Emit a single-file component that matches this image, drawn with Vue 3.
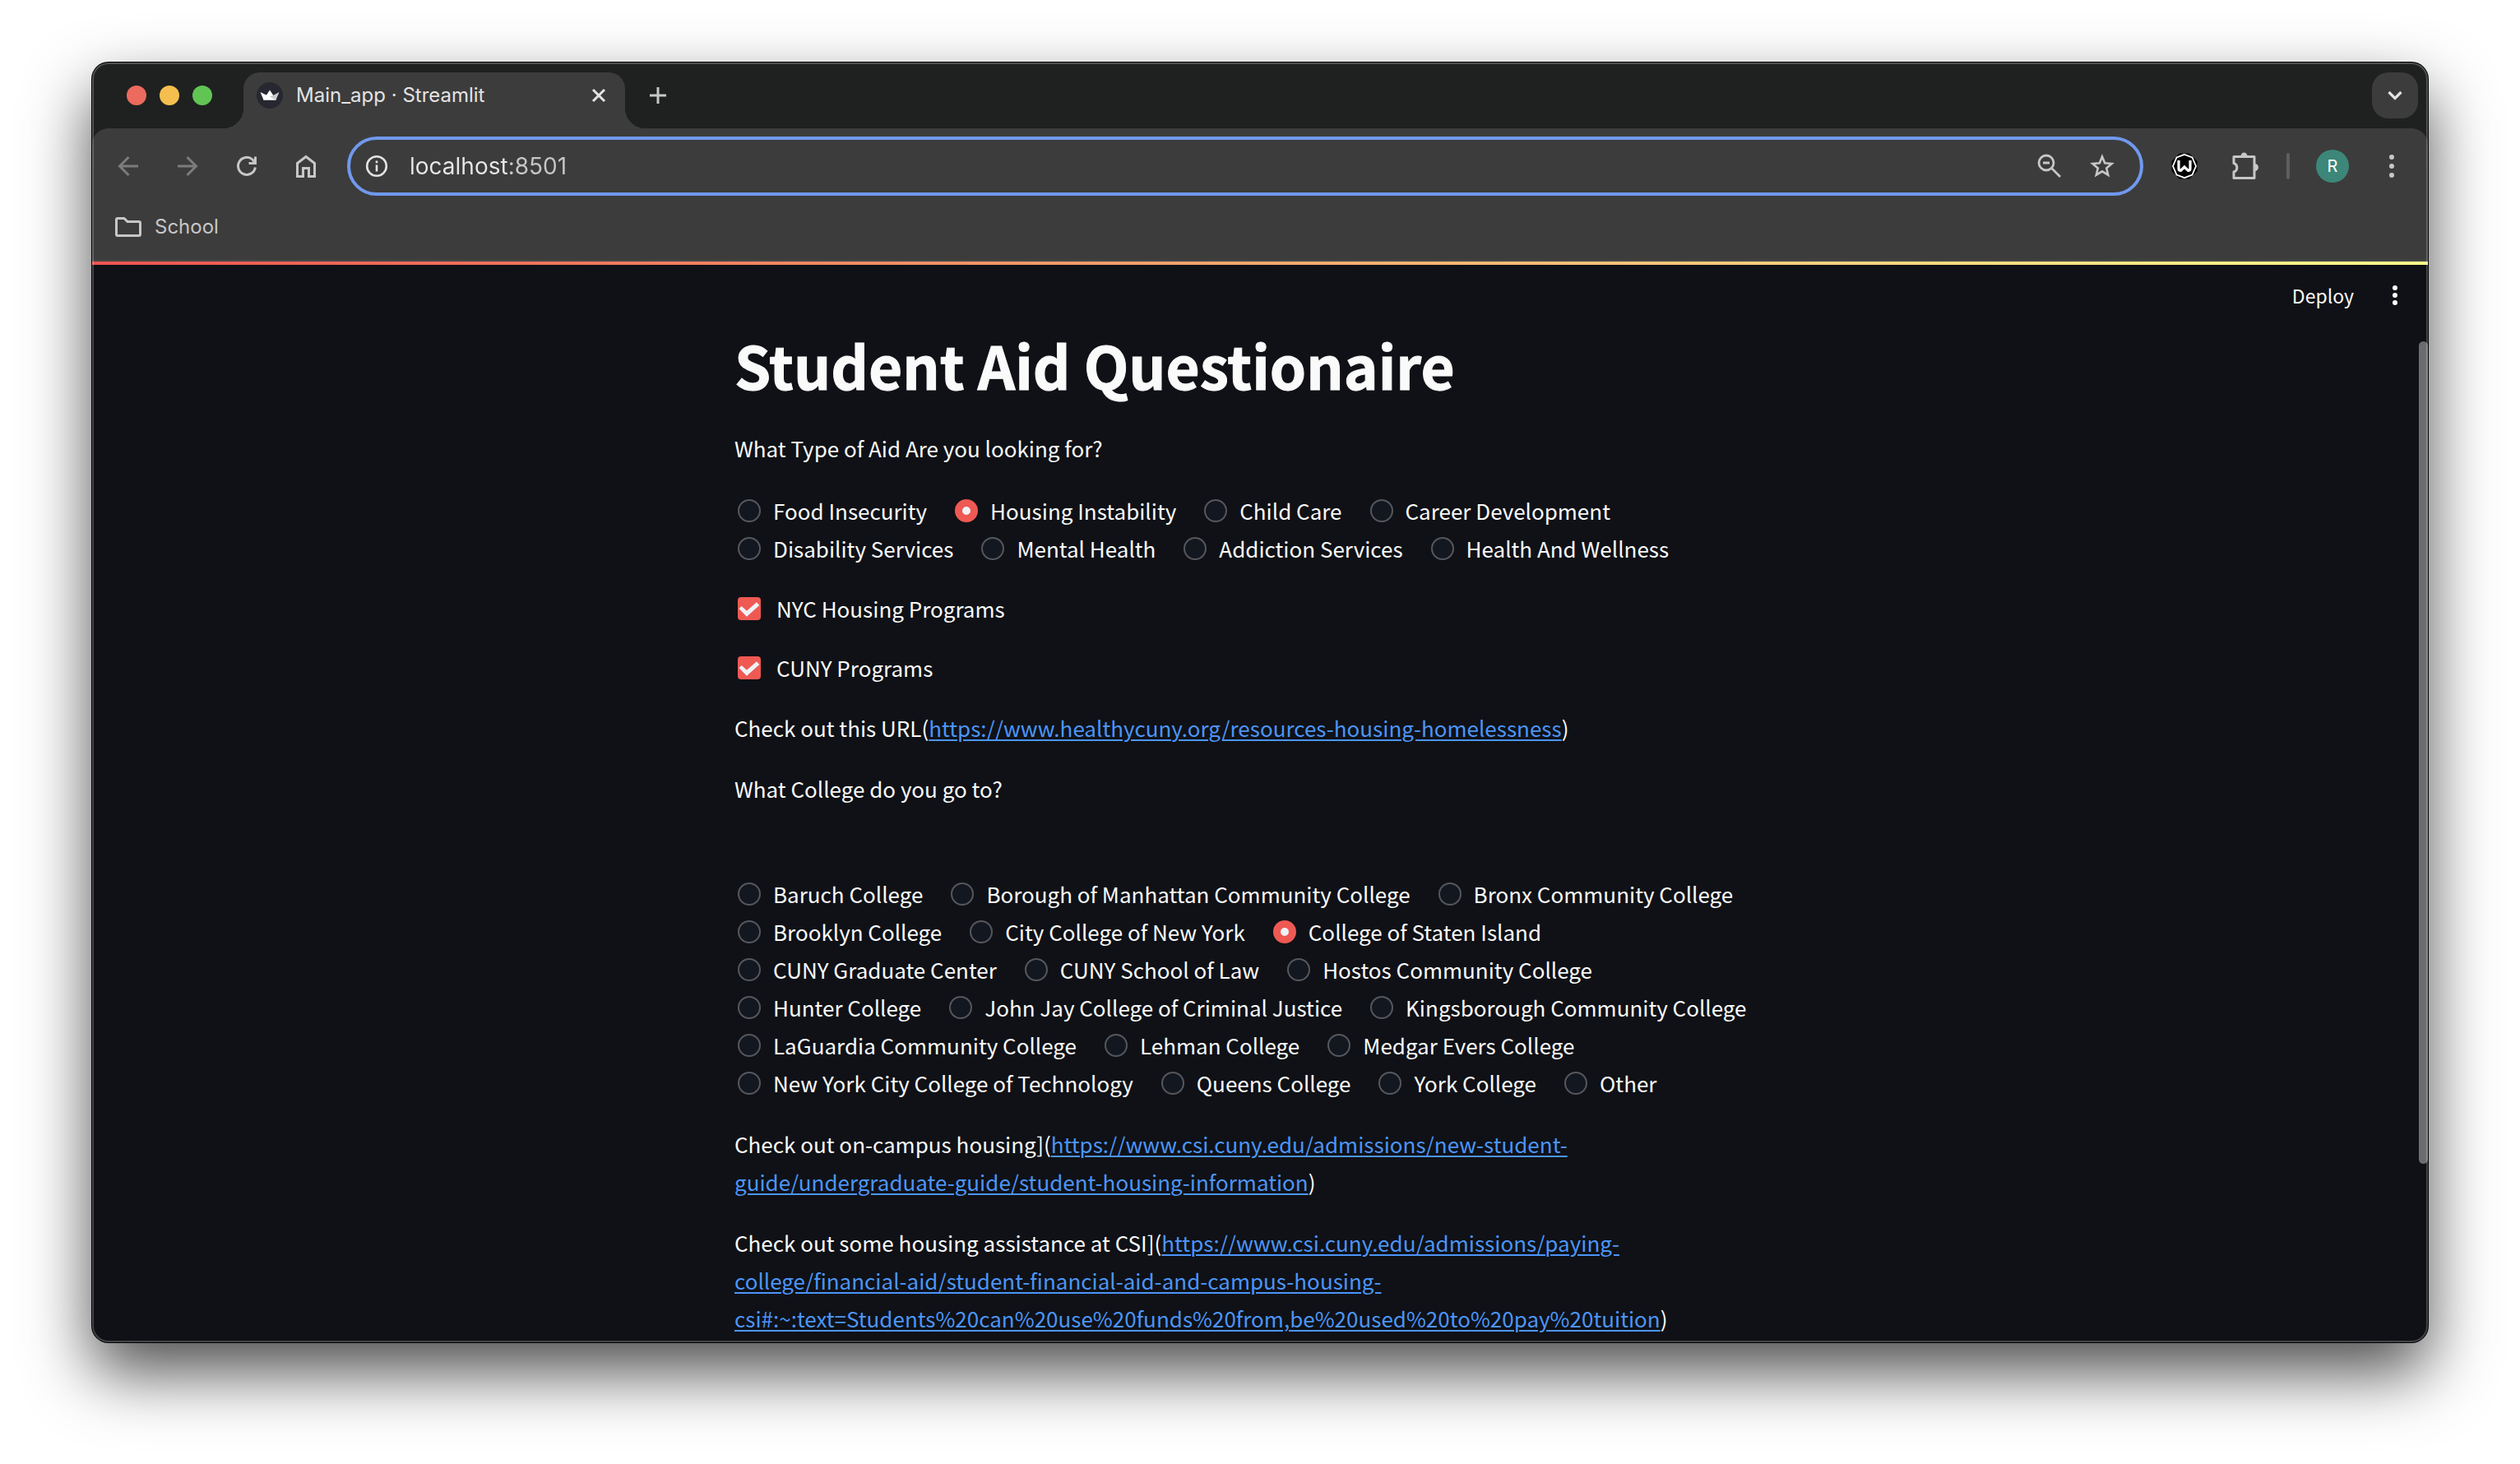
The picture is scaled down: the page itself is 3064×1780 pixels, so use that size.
<script setup>
import { ref } from 'vue'

const aidTypes = [
  'Food Insecurity', 'Housing Instability', 'Child Care', 'Career Development',
  'Disability Services', 'Mental Health', 'Addiction Services', 'Health And Wellness',
]
const colleges = [
  'Baruch College', 'Borough of Manhattan Community College', 'Bronx Community College',
  'Brooklyn College', 'City College of New York', 'College of Staten Island',
  'CUNY Graduate Center', 'CUNY School of Law', 'Hostos Community College',
  'Hunter College', 'John Jay College of Criminal Justice', 'Kingsborough Community College',
  'LaGuardia Community College', 'Lehman College', 'Medgar Evers College',
  'New York City College of Technology', 'Queens College', 'York College', 'Other',
]

const address = ref('localhost:8501')
const aid = ref('Housing Instability')
const college = ref('College of Staten Island')
const nycHousing = ref(true)
const cunyPrograms = ref(true)

const healthyCuny = 'https://www.healthycuny.org/resources-housing-homelessness'
const campusHousing = 'https://www.csi.cuny.edu/admissions/new-student-guide/undergraduate-guide/student-housing-information'
const housingHelp = 'https://www.csi.cuny.edu/admissions/paying-college/financial-aid/student-financial-aid-and-campus-housing-csi#:~:text=Students%20can%20use%20funds%20from,be%20used%20to%20pay%20tuition'
</script>

<template>
  <div class="desktop">
    <div class="window">
      <header class="tabstrip">
        <div class="lights">
          <button class="light close" aria-label="Close window"></button>
          <button class="light minimize" aria-label="Minimize window"></button>
          <button class="light zoom" aria-label="Zoom window"></button>
        </div>
        <div class="tab">
          <svg class="favicon" viewBox="0 0 32 32" aria-hidden="true">
            <circle cx="16" cy="16" r="16" fill="#262730" />
            <path d="M16 9.500 L24 21.500 H8 Z" fill="#fff" />
            <path d="M4.500 12 L24 21.500 H8.500 Z" fill="#fff" />
            <path d="M27.500 12 L20 16 L16 17.500 L23.500 21.500 Z" fill="#c9c9ce" />
          </svg>
          <span class="tab-title">Main_app · Streamlit</span>
          <button class="icon tab-close" aria-label="Close tab">
            <svg width="24" height="24" viewBox="0 0 24 24"><path d="M5 5 L19 19 M19 5 L5 19" stroke="#e3e3e3" stroke-width="3" /></svg>
          </button>
        </div>
        <button class="icon new-tab" aria-label="New tab">
          <svg width="24" height="24" viewBox="0 0 24 24"><path d="M12 2 V22 M2 12 H22" stroke="#c7c7c7" stroke-width="3" /></svg>
        </button>
        <button class="icon tab-search" aria-label="Search tabs">
          <svg width="24" height="24" viewBox="0 0 24 24"><path d="M4.500 8 L12 15.500 L19.500 8" fill="none" stroke="#e3e3e3" stroke-width="3.200" /></svg>
        </button>
      </header>

      <nav class="toolbar" aria-label="Browser toolbar">
        <button class="icon nav dim" aria-label="Back">
          <svg width="32" height="32" viewBox="0 0 32 32"><path d="M28 16 H6 M16.500 5 L5.500 16 L16.500 27" /></svg>
        </button>
        <button class="icon nav dim" aria-label="Forward">
          <svg width="32" height="32" viewBox="0 0 32 32"><path d="M4 16 H26 M15.500 5 L26.500 16 L15.500 27" /></svg>
        </button>
        <button class="icon nav" aria-label="Reload">
          <svg width="32" height="32" viewBox="0 0 32 32"><path d="M26.400 17.500 A10.500 10.500 0 1 1 23 8 L26 11.500 M26.500 4.500 V12.500 H18.500" /></svg>
        </button>
        <button class="icon nav" aria-label="Home">
          <svg width="32" height="32" viewBox="0 0 32 32"><path d="M5.500 12.500 L16 4.500 L26.500 12.500 V28.500 H19.500 V18.500 H12.500 V28.500 H5.500 Z" /></svg>
        </button>
        <div class="omnibox">
          <button class="icon" aria-label="Site information">
            <svg width="28" height="28" viewBox="0 0 28 28" fill="none" stroke="#e3e3e3"><circle cx="14" cy="14" r="11.800" stroke-width="2.600" /><path d="M14 12.500 V20.500 M14 7.500 V10.300" stroke-width="2.600" /></svg>
          </button>
          <input v-model="address" class="address" type="text" aria-label="Address" spellcheck="false" />
          <button class="icon" aria-label="Zoom level">
            <svg width="32" height="32" viewBox="0 0 32 32" fill="none" stroke="#c7c7c7" stroke-width="2.800"><circle cx="12" cy="12" r="9" /><path d="M18.500 18.500 L29 29 M8 12 H16" /></svg>
          </button>
          <button class="icon" aria-label="Bookmark this page">
            <svg width="32" height="32" viewBox="0 0 32 32" fill="none" stroke="#c7c7c7" stroke-width="2.600"><path d="M16 4.500 L19.200 12.300 L27.600 13 L21.200 18.500 L23.200 26.700 L16 22.300 L8.800 26.700 L10.800 18.500 L4.400 13 L12.800 12.300 Z" /></svg>
          </button>
        </div>
        <div class="extensions">
          <button class="icon web-extension" aria-label="Web extension">
            <svg width="32" height="32" viewBox="0 0 32 32"><path d="M10 0.500 H22 L31.500 10 V22 L22 31.500 H10 L0.500 22 V10 Z" fill="#000" /><path d="M16 1.800 L25.500 5.500 L30 16 L25.500 26.500 L16 30.200 L6.500 26.500 L2 16 L6.500 5.500 Z" fill="#000" stroke="#fff" stroke-width="1.800" /><path d="M9 9 V18.500 Q9 21.500 11.500 21.500 L16 17 L20.500 21.500 Q23 21.500 23 18.500 V9" fill="none" stroke="#fff" stroke-width="3.200" /></svg>
          </button>
          <button class="icon" aria-label="Extensions">
            <svg width="36" height="36" viewBox="0 0 36 36"><path d="M4 6.500 H29 V32.500 H4 V25 A5.500 5.500 0 0 0 4 14.500 Z" fill="none" stroke="#c7c7c7" stroke-width="3" stroke-linejoin="round" /><path d="M12.500 6 A4 4.500 0 0 1 20.500 6 Z M29.500 15 A4.500 4.500 0 0 1 29.500 24 Z" fill="#c7c7c7" /></svg>
          </button>
          <span class="divider"></span>
          <button class="avatar" aria-label="Profile">R</button>
          <button class="icon" aria-label="Browser menu">
            <svg width="32" height="32" viewBox="0 0 32 32" fill="#c7c7c7"><circle cx="16" cy="5" r="3" /><circle cx="16" cy="16" r="3" /><circle cx="16" cy="27" r="3" /></svg>
          </button>
        </div>
      </nav>

      <div class="bookmarks">
        <button class="bookmark">
          <svg width="34" height="28" viewBox="0 0 34 28"><path d="M2.500 5 Q2.500 3.500 4 3.500 H12 L16 7.500 H30 Q31.500 7.500 31.500 9 V23 Q31.500 24.500 30 24.500 H4 Q2.500 24.500 2.500 23 Z" fill="none" stroke="#c7c7c7" stroke-width="3" /></svg>
          School
        </button>
      </div>

      <div class="page">
        <div class="decoration"></div>
        <div class="app-bar">
          <button class="deploy">Deploy</button>
          <button class="icon" aria-label="App menu">
            <svg width="28" height="28" viewBox="0 0 28 28" fill="#fafafa"><circle cx="14" cy="5" r="3" /><circle cx="14" cy="14" r="3" /><circle cx="14" cy="23" r="3" /></svg>
          </button>
        </div>

        <main class="content">
          <h1>Student Aid Questionaire</h1>
          <p id="aid-label">What Type of Aid Are you looking for?</p>
          <div class="options" role="radiogroup" aria-labelledby="aid-label">
            <label v-for="item in aidTypes" :key="item" class="option">
              <input v-model="aid" type="radio" name="aid" :value="item" />{{ item }}
            </label>
          </div>
          <label class="check"><input v-model="nycHousing" type="checkbox" />NYC Housing Programs</label>
          <label class="check"><input v-model="cunyPrograms" type="checkbox" />CUNY Programs</label>
          <p>Check out this URL(<a :href="healthyCuny">{{ healthyCuny }}</a>)</p>
          <p id="college-label">What College do you go to?</p>
          <div class="options colleges" role="radiogroup" aria-labelledby="college-label">
            <label v-for="item in colleges" :key="item" class="option">
              <input v-model="college" type="radio" name="college" :value="item" />{{ item }}
            </label>
          </div>
          <p>Check out on-campus housing](<a :href="campusHousing">{{ campusHousing }}</a>)</p>
          <p>Check out some housing assistance at CSI](<a :href="housingHelp">{{ housingHelp }}</a>)</p>
        </main>
        <div class="scrollbar"></div>
      </div>
    </div>
  </div>
</template>

<style>
body {
  margin: 0;
  background: #fff;
}
</style>

<style scoped>
* {
  box-sizing: border-box;
}

button {
  margin: 0;
  padding: 0;
  border: 0;
  background: none;
  color: inherit;
  font: inherit;
}

.desktop {
  display: flex;
  min-height: 100vh;
  padding: 76px 112px 148px;
  overflow: hidden;
  font-family: Inter, "Liberation Sans", sans-serif;
}

.window {
  position: relative;
  display: flex;
  flex: 1;
  flex-direction: column;
  min-width: 0;
  overflow: hidden;
  border-radius: 20px;
  background: #1f2120;
  box-shadow: 0 0 0 1px #000, 0 36px 80px rgba(0, 0, 0, 0.7);
}

.window::after {
  position: absolute;
  inset: 0;
  border-radius: 20px;
  box-shadow: inset 0 0 0 2px rgba(255, 255, 255, 0.22);
  content: "";
  pointer-events: none;
}

.icon {
  display: flex;
  align-items: center;
  justify-content: center;
}

.tabstrip {
  display: flex;
  align-items: center;
  height: 80px;
  padding: 0 12px 0 42px;
}

.lights {
  display: flex;
  gap: 16px;
  margin-right: 38px;
}

.light {
  width: 24px;
  height: 24px;
  border-radius: 50%;
}

.close { background: #ec6a5e; }
.minimize { background: #f4bf4f; }
.zoom { background: #61c554; }

.tab {
  position: relative;
  display: flex;
  align-items: center;
  align-self: flex-end;
  width: 464px;
  height: 68px;
  padding: 0 20px 12px 16px;
  border-radius: 20px 20px 0 0;
  background: #3c3c3c;
}

.tab::before,
.tab::after {
  position: absolute;
  bottom: 0;
  width: 24px;
  height: 24px;
  content: "";
}

.tab::before {
  right: 100%;
  background: radial-gradient(circle at 0 0, transparent 24px, #3c3c3c 24px);
}

.tab::after {
  left: 100%;
  background: radial-gradient(circle at 100% 0, transparent 24px, #3c3c3c 24px);
}

.favicon {
  width: 32px;
  height: 32px;
}

.tab-title {
  flex: 1;
  margin-left: 16px;
  color: #e3e3e3;
  font-size: 24px;
  line-height: 32px;
  white-space: nowrap;
}

.new-tab {
  width: 56px;
  height: 56px;
  margin-left: 12px;
}

.tab-search {
  width: 56px;
  height: 56px;
  margin-left: auto;
  border-radius: 20px;
  background: #3c3c3c;
}

.toolbar {
  display: flex;
  align-items: center;
  height: 92px;
  padding: 0 28px 0 8px;
  border-radius: 20px 20px 0 0;
  background: #3c3c3c;
}

.nav {
  width: 72px;
  height: 56px;
}

.nav svg {
  fill: none;
  stroke: #c7c7c7;
  stroke-width: 3;
}

.dim svg {
  stroke: #7c7c7c;
}

.omnibox {
  display: flex;
  flex: 1;
  align-items: center;
  gap: 32px;
  min-width: 0;
  height: 72px;
  margin-left: 14px;
  padding: 0 30px 0 18px;
  border: 4px solid #7099ee;
  border-radius: 36px;
}

.address {
  flex: 1;
  min-width: 0;
  margin-left: -6px;
  padding: 0;
  border: 0;
  outline: 0;
  background: linear-gradient(90deg, #e8e8e8 120px, #c7c7c7 120px);
  background-clip: text;
  color: transparent;
  font: 28px/40px Inter, "Liberation Sans", sans-serif;
}

.extensions {
  display: flex;
  align-items: center;
  margin-left: 34px;
  gap: 36px;
}

.web-extension {
  margin-right: 4px;
}

.divider {
  width: 4px;
  height: 32px;
  margin-left: -4px;
  border-radius: 2px;
  background: #5e5e5e;
}

.avatar {
  width: 40px;
  height: 40px;
  margin-left: -4px;
  border-radius: 50%;
  background: #3c8779;
  color: #fff;
  font: 20px/40px Inter, "Liberation Sans", sans-serif;
}

.bookmarks {
  display: flex;
  align-items: center;
  height: 70px;
  padding: 0 27px 12px;
  border-bottom: 2px solid #464847;
  background: #3c3c3c;
}

.bookmark {
  display: flex;
  align-items: center;
  gap: 15px;
  color: #c7c7c7;
  font-size: 24px;
  line-height: 32px;
}

.page {
  position: relative;
  flex: 1;
  background: #0f1116;
  color: #fafafa;
  font-family: "Noto Sans CJK SC", "Noto Sans", sans-serif;
  font-size: 26px;
  line-height: 46px;
}

.decoration {
  height: 4px;
  background: linear-gradient(90deg, #ee5451, #fffd8c);
}

.app-bar {
  position: absolute;
  top: 18px;
  right: 26px;
  display: flex;
  align-items: center;
  gap: 36px;
}

.deploy {
  font-size: 23px;
  line-height: 46px;
}

.content {
  display: flex;
  flex-direction: column;
  gap: 28px;
  width: 1278px;
  max-width: 100%;
  margin: 0 auto;
  padding: 74px 11px 4px 0;
}

h1 {
  margin: 0 0 3px;
  font-size: 71px;
  font-weight: 700;
  line-height: 95px;
  -webkit-text-stroke: 1px currentColor;
}

p {
  margin: 0;
}

a {
  color: #4c95f8;
  text-decoration-thickness: 2px;
  text-underline-offset: 3px;
}

.options {
  display: flex;
  flex-wrap: wrap;
  column-gap: 30px;
  padding-top: 2px;
}

.colleges {
  margin-top: 52px;
}

.option,
.check {
  display: flex;
  align-items: center;
  padding-left: 4px;
}

.option {
  gap: 15px;
}

.check {
  gap: 19px;
  height: 44px;
}

.option input,
.check input {
  flex: none;
  width: 28px;
  height: 28px;
  margin: 0;
  appearance: none;
}

.option input {
  border: 2px solid #55575c;
  border-radius: 50%;
  background: #131720;
}

.option input:checked {
  border: 9px solid #ee5953;
  background: #f0f2f6;
}

.check input {
  border-radius: 4px;
  background: #131720;
}

.check input:checked {
  background: #ee5953;
}

.check input:checked::after {
  display: block;
  width: 28px;
  height: 28px;
  background: #f0f2f6;
  clip-path: polygon(5% 50%, 17% 39%, 39% 60%, 82% 22%, 94% 36%, 39% 85%);
  content: "";
}

.scrollbar {
  position: absolute;
  top: 97px;
  right: 0;
  width: 11px;
  height: 1000px;
  border-radius: 6px;
  background: #6b6c70;
}
</style>
